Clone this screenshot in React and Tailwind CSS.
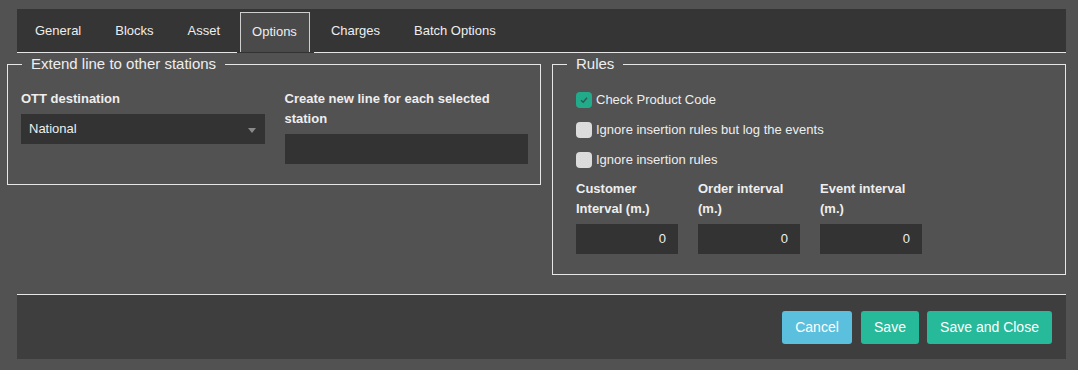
import { useState } from "react";

const tabs = ["General", "Blocks", "Asset", "Options", "Charges", "Batch Options"];

const rules = [
  { label: "Check Product Code", checked: true },
  { label: "Ignore insertion rules but log the events", checked: false },
  { label: "Ignore insertion rules", checked: false },
];

const intervals = [
  { label: "Customer Interval (m.)", value: 0 },
  { label: "Order interval (m.)", value: 0 },
  { label: "Event interval (m.)", value: 0 },
];

const Checkbox = ({ checked }) => (
  <span
    className={
      checked
        ? "w-[16px] h-[16px] rounded-[4px] bg-[#22ab8b] flex items-center justify-center"
        : "w-[16px] h-[16px] rounded-[4px] bg-[#dcdcdc]"
    }
  >
    {checked && (
      <svg width="10" height="10" viewBox="0 0 10 10">
        <path d="M2 5.2 L4.2 7.2 L8 2.8" fill="none" stroke="#2e5b52" strokeWidth="1.5" />
      </svg>
    )}
  </span>
);

const App = () => {
  const [active, setActive] = useState("Options");

  return (
    <div className="w-[1078px] h-[370px] overflow-hidden bg-[#525252] pt-[9px] text-[13px] text-[#eeeeee] font-['Liberation_Sans',Arial,sans-serif]">
      {/* Tab bar */}
      <div className="ml-[17px] w-[1049px] h-[44px] bg-[#353535] border-b border-[#e6e6e6] flex items-end pl-[1px]">
        {tabs.map((t) =>
          t === active ? (
            <div key={t} className="h-[43px] -mb-px pl-[3px] pr-[4px] flex flex-col">
              <div className="flex-1 mt-[2px] pl-[11px] pr-[12px] pb-[1px] border border-b-0 border-[#cfcfcf] bg-[#4a4a4a] flex items-center">
                {t}
              </div>
              <div className="h-[1px] -ml-[3px] -mr-[4px] bg-[#333333]"></div>
            </div>
          ) : (
            <button
              key={t}
              onClick={() => setActive(t)}
              className="h-full px-[17px] flex items-center cursor-pointer"
            >
              {t}
            </button>
          )
        )}
      </div>

      <div className="flex mt-[1px]">
        {/* Extend line fieldset */}
        <fieldset className="ml-[7px] w-[534px] self-start border border-[#e6e6e6] pl-[13px] pr-[12px] pt-[15px] pb-[20px]">
          <legend className="ml-[1px] px-[9px] text-[15px] leading-[20px]">Extend line to other stations</legend>
          <div className="grid grid-cols-2 gap-x-[20px]">
            <div>
              <div className="font-bold leading-[20px] mb-[5px]">OTT destination</div>
              <div className="h-[30px] bg-[#333333] flex items-center justify-between pl-[8px] pr-[9px]">
                <span>National</span>
                <svg width="8" height="5" viewBox="0 0 8 5" className="mt-[2px]">
                  <polygon points="0,0 8,0 4,5" fill="#8a8a8a" />
                </svg>
              </div>
            </div>
            <div>
              <div className="font-bold leading-[20px] mb-[5px]">Create new line for each selected station</div>
              <div className="h-[30px] bg-[#333333]"></div>
            </div>
          </div>
        </fieldset>

        {/* Rules fieldset */}
        <fieldset className="ml-[11px] w-[514px] border border-[#e6e6e6] pl-[23px] pt-[11px] pb-[20px]">
          <legend className="-ml-[9px] px-[9px] text-[15px] leading-[20px]">Rules</legend>
          {rules.map((r) => (
            <div key={r.label} className="h-[30px] flex items-center gap-[4px]">
              <Checkbox checked={r.checked} />
              <span>{r.label}</span>
            </div>
          ))}
          <div className="mt-[4px] grid grid-cols-[102px_102px_102px] gap-x-[20px]">
            {intervals.map((i) => (
              <div key={i.label}>
                <div className="font-bold leading-[20px] mb-[5px]">{i.label}</div>
                <div className="h-[30px] bg-[#333333] flex items-center justify-end pr-[12px]">{i.value}</div>
              </div>
            ))}
          </div>
        </fieldset>
      </div>

      {/* Footer */}
      <div className="mt-[19px] ml-[17px] w-[1049px] h-[65px] bg-[#3e3e3e] border-t border-[#e6e6e6] flex items-center justify-end pr-[14px]">
        <button className="w-[70px] h-[33px] rounded-[3px] bg-[#5bc0de] text-white text-[14px]">Cancel</button>
        <button className="ml-[9px] w-[58px] h-[33px] rounded-[3px] bg-[#26b99a] text-white text-[14px]">Save</button>
        <button className="ml-[8px] w-[125px] h-[33px] rounded-[3px] bg-[#26b99a] text-white text-[14px]">Save and Close</button>
      </div>
    </div>
  );
};

export default App;
